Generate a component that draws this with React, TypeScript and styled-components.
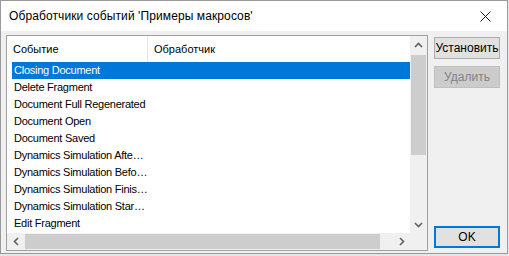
import React from "react";
import styled, { createGlobalStyle } from "styled-components";

const GlobalStyle = createGlobalStyle`
  html, body {
    margin: 0;
    padding: 0;
    background: #e6e6e6;
  }
  * {
    box-sizing: border-box;
  }
`;

const events = [
  "Closing Document",
  "Delete Fragment",
  "Document Full Regenerated",
  "Document Open",
  "Document Saved",
  "Dynamics Simulation Afte…",
  "Dynamics Simulation Befo…",
  "Dynamics Simulation Finis…",
  "Dynamics Simulation Star…",
  "Edit Fragment",
];

const FONT = `"Liberation Sans", Arial, sans-serif`;

const App = () => {
  return (
    <>
      <GlobalStyle />
      <Window>
        <TitleBar>
          <Title>Обработчики событий 'Примеры макросов'</Title>
          <CloseButton>
            <svg width="11" height="11" viewBox="0 0 11 11">
              <path d="M0.5 0.5 L10.5 10.5 M10.5 0.5 L0.5 10.5" stroke="#1a1a1a" strokeWidth="1" />
            </svg>
          </CloseButton>
        </TitleBar>
        <Body>
          <ListBox>
            <Viewport>
              <Header>
                <HeaderCell $width={141}>Событие</HeaderCell>
                <HeaderCell>Обработчик</HeaderCell>
              </Header>
              <Rows>
                {events.map((name, i) => (
                  <Row key={name} $selected={i === 0}>
                    {name}
                  </Row>
                ))}
              </Rows>
            </Viewport>
            <VScroll>
              <ArrowBox>
                <svg width="9" height="6" viewBox="0 0 9 6">
                  <path d="M1 5 L4.5 1.5 L8 5" stroke="#606060" strokeWidth="1.6" fill="none" />
                </svg>
              </ArrowBox>
              <VTrack>
                <VThumb />
              </VTrack>
              <ArrowBox>
                <svg width="9" height="6" viewBox="0 0 9 6">
                  <path d="M1 1 L4.5 4.5 L8 1" stroke="#606060" strokeWidth="1.6" fill="none" />
                </svg>
              </ArrowBox>
            </VScroll>
            <HScroll>
              <ArrowBox>
                <svg width="6" height="9" viewBox="0 0 6 9">
                  <path d="M5 1 L1.5 4.5 L5 8" stroke="#606060" strokeWidth="1.6" fill="none" />
                </svg>
              </ArrowBox>
              <HTrack>
                <HThumb />
              </HTrack>
              <ArrowBox>
                <svg width="6" height="9" viewBox="0 0 6 9">
                  <path d="M1 1 L4.5 4.5 L1 8" stroke="#606060" strokeWidth="1.6" fill="none" />
                </svg>
              </ArrowBox>
            </HScroll>
            <Corner />
          </ListBox>
          <Buttons>
            <Button>Установить</Button>
            <Button disabled>Удалить</Button>
            <Spacer />
            <Button $default>OK</Button>
          </Buttons>
        </Body>
      </Window>
    </>
  );
};

export default App;

const Window = styled.div`
  width: 508px;
  height: 254px;
  border: 1px solid #9a9a9a;
  display: flex;
  flex-direction: column;
  font-family: ${FONT};
  font-size: 11px;
  color: #000;
  background: #f0f0f0;
`;

const TitleBar = styled.div`
  height: 30px;
  background: #fff;
  display: flex;
  align-items: center;
  justify-content: space-between;
  padding-left: 8px;
`;

const Title = styled.div`
  font-size: 12px;
  letter-spacing: 0.1px;
  color: #000;
`;

const CloseButton = styled.div`
  width: 46px;
  height: 30px;
  display: flex;
  align-items: center;
  justify-content: center;
  margin-right: -1px;
`;

const Body = styled.div`
  flex: 1;
  display: flex;
  gap: 6px;
  padding: 4px 7px 2px 5px;
`;

const ListBox = styled.div`
  width: 422px;
  border: 1px solid #a0a0a0;
  background: #fff;
  display: grid;
  grid-template-columns: 1fr 17px;
  grid-template-rows: 1fr 17px;
`;

const Viewport = styled.div`
  overflow: hidden;
  display: flex;
  flex-direction: column;
`;

const Header = styled.div`
  height: 26px;
  display: flex;
  flex-shrink: 0;
`;

const HeaderCell = styled.div<{ $width?: number }>`
  width: ${({ $width }) => ($width ? `${$width}px` : "auto")};
  flex: ${({ $width }) => ($width ? "none" : "1")};
  border-right: ${({ $width }) => ($width ? "1px solid #e5e5e5" : "none")};
  display: flex;
  align-items: center;
  padding-left: 6px;
  padding-bottom: 1px;
`;

const Rows = styled.div`
  padding-left: 5px;
  display: flex;
  flex-direction: column;
`;

const Row = styled.div<{ $selected?: boolean }>`
  height: 17px;
  line-height: 17px;
  padding-left: 2px;
  white-space: nowrap;
  letter-spacing: -0.25px;
  background: ${({ $selected }) => ($selected ? "#0078d7" : "transparent")};
  color: ${({ $selected }) => ($selected ? "#fff" : "#000")};
`;

const VScroll = styled.div`
  background: #f0f0f0;
  display: flex;
  flex-direction: column;
`;

const HScroll = styled.div`
  background: #f0f0f0;
  display: flex;
`;

const ArrowBox = styled.div`
  width: 17px;
  height: 17px;
  flex-shrink: 0;
  display: flex;
  align-items: center;
  justify-content: center;
`;

const VTrack = styled.div`
  flex: 1;
  padding: 2px 1px 0;
`;

const VThumb = styled.div`
  height: 100px;
  background: #cdcdcd;
`;

const HTrack = styled.div`
  flex: 1;
  padding: 1px 0 1px 1px;
`;

const HThumb = styled.div`
  width: 355px;
  height: 100%;
  background: #cdcdcd;
`;

const Corner = styled.div`
  background: #f0f0f0;
`;

const Buttons = styled.div`
  width: 66px;
  display: flex;
  flex-direction: column;
  gap: 7px;
  padding-top: 2px;
  padding-bottom: 3px;
`;

const Spacer = styled.div`
  flex: 1;
`;

const Button = styled.button<{ $default?: boolean }>`
  height: 22px;
  margin: 0;
  padding: 0;
  font-family: ${FONT};
  font-size: 12px;
  color: #000;
  background: #e1e1e1;
  border: ${({ $default }) => ($default ? "2px solid #0078d7" : "1px solid #adadad")};
  &:disabled {
    background: #cccccc;
    border-color: #bfbfbf;
    color: #838383;
  }
`;
